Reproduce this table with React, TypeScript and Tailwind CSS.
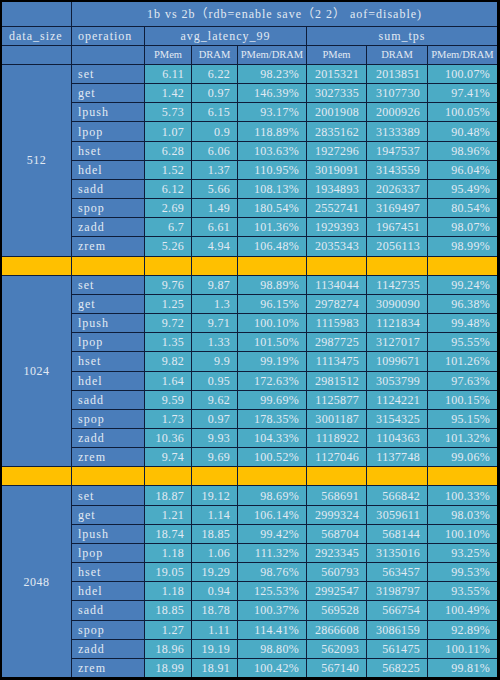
import React from 'react';

type Row = [string, string, string, string, string, string, string];

const GROUPS: { size: string; rows: Row[] }[] = [
  {
    size: '512',
    rows: [
      ['set', '6.11', '6.22', '98.23%', '2015321', '2013851', '100.07%'],
      ['get', '1.42', '0.97', '146.39%', '3027335', '3107730', '97.41%'],
      ['lpush', '5.73', '6.15', '93.17%', '2001908', '2000926', '100.05%'],
      ['lpop', '1.07', '0.9', '118.89%', '2835162', '3133389', '90.48%'],
      ['hset', '6.28', '6.06', '103.63%', '1927296', '1947537', '98.96%'],
      ['hdel', '1.52', '1.37', '110.95%', '3019091', '3143559', '96.04%'],
      ['sadd', '6.12', '5.66', '108.13%', '1934893', '2026337', '95.49%'],
      ['spop', '2.69', '1.49', '180.54%', '2552741', '3169497', '80.54%'],
      ['zadd', '6.7', '6.61', '101.36%', '1929393', '1967451', '98.07%'],
      ['zrem', '5.26', '4.94', '106.48%', '2035343', '2056113', '98.99%'],
    ],
  },
  {
    size: '1024',
    rows: [
      ['set', '9.76', '9.87', '98.89%', '1134044', '1142735', '99.24%'],
      ['get', '1.25', '1.3', '96.15%', '2978274', '3090090', '96.38%'],
      ['lpush', '9.72', '9.71', '100.10%', '1115983', '1121834', '99.48%'],
      ['lpop', '1.35', '1.33', '101.50%', '2987725', '3127017', '95.55%'],
      ['hset', '9.82', '9.9', '99.19%', '1113475', '1099671', '101.26%'],
      ['hdel', '1.64', '0.95', '172.63%', '2981512', '3053799', '97.63%'],
      ['sadd', '9.59', '9.62', '99.69%', '1125877', '1124221', '100.15%'],
      ['spop', '1.73', '0.97', '178.35%', '3001187', '3154325', '95.15%'],
      ['zadd', '10.36', '9.93', '104.33%', '1118922', '1104363', '101.32%'],
      ['zrem', '9.74', '9.69', '100.52%', '1127046', '1137748', '99.06%'],
    ],
  },
  {
    size: '2048',
    rows: [
      ['set', '18.87', '19.12', '98.69%', '568691', '566842', '100.33%'],
      ['get', '1.21', '1.14', '106.14%', '2999324', '3059611', '98.03%'],
      ['lpush', '18.74', '18.85', '99.42%', '568704', '568144', '100.10%'],
      ['lpop', '1.18', '1.06', '111.32%', '2923345', '3135016', '93.25%'],
      ['hset', '19.05', '19.29', '98.76%', '560793', '563457', '99.53%'],
      ['hdel', '1.18', '0.94', '125.53%', '2992547', '3198797', '93.55%'],
      ['sadd', '18.85', '18.78', '100.37%', '569528', '566754', '100.49%'],
      ['spop', '1.27', '1.11', '114.41%', '2866608', '3086159', '92.89%'],
      ['zadd', '18.96', '19.19', '98.80%', '562093', '561475', '100.11%'],
      ['zrem', '18.99', '18.91', '100.42%', '567140', '568225', '99.81%'],
    ],
  },
];

const blue = 'bg-[#4a7dba] flex items-center';
const teal = 'bg-[#4babc5] flex items-center justify-end pr-[7px] tracking-[0.3px]';
const yellow = 'bg-[#ffc000]';

export default function App() {
  return (
    <div className="w-[500px] h-[680px] bg-black pt-[2px] pl-[2px] pr-[3px] pb-[3px]">
      <div className="h-full grid gap-px bg-[#0e1d3a] text-[12px] leading-none text-[#e2eaf3] font-['Liberation_Serif','Noto_Sans_CJK_SC',serif] grid-cols-[69px_72px_46px_45px_68px_59px_60px_69px] grid-rows-[24px_18px_18px_repeat(32,1fr)]">
        <div className={blue} />
        <div className={`${blue} col-span-7 justify-center tracking-[1px]`}>
          1b vs 2b（rdb=enable save（2 2） aof=disable)
        </div>

        <div className={`${blue} pl-[7px] tracking-[1px]`}>data_size</div>
        <div className={`${blue} pl-[6px] tracking-[1px]`}>operation</div>
        <div className={`${blue} col-span-3 justify-center tracking-[1px]`}>avg_latency_99</div>
        <div className={`${blue} col-span-3 justify-center tracking-[1px]`}>sum_tps</div>

        <div className={blue} />
        <div className={blue} />
        {['PMem', 'DRAM', 'PMem/DRAM', 'PMem', 'DRAM', 'PMem/DRAM'].map((h, i) => (
          <div key={i} className={`${blue} justify-center text-[10.5px]`}>
            {h}
          </div>
        ))}

        {GROUPS.map((g, gi) => (
          <React.Fragment key={g.size}>
            <div className={`${blue} row-span-10 justify-center tracking-[0.5px]`}>{g.size}</div>
            {g.rows.map((r) => (
              <React.Fragment key={r[0]}>
                <div className={`${blue} pl-[6px] tracking-[1px]`}>{r[0]}</div>
                {r.slice(1).map((v, i) => (
                  <div key={i} className={teal}>
                    {v}
                  </div>
                ))}
              </React.Fragment>
            ))}
            {gi < GROUPS.length - 1 &&
              Array.from({ length: 8 }).map((_, i) => <div key={`y${i}`} className={yellow} />)}
          </React.Fragment>
        ))}
      </div>
    </div>
  );
}
